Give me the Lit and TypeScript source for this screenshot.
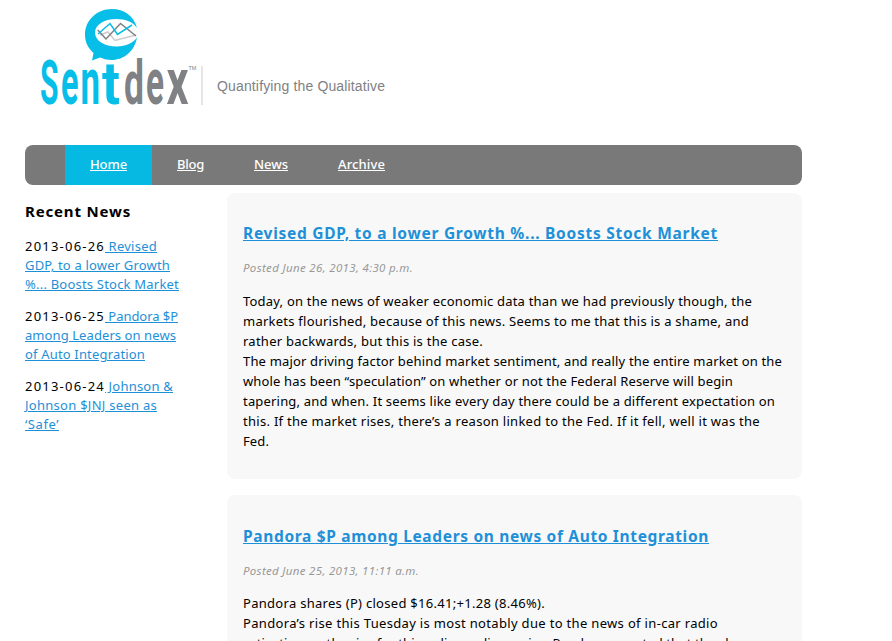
import { LitElement, html, css, svg } from "lit";
import { customElement, property } from "lit/decorators.js";

/** One line of text, tracked so that it spans the given width. */
@customElement("fit-line")
class FitLine extends LitElement {
  @property({ type: Number }) span = 0;
  static styles = css`
    :host { display: block; width: max-content; white-space: pre; }
  `;
  render() { return html`<slot></slot>`; }
  firstUpdated() {
    const count = (this.textContent ?? "").length;
    const natural = this.getBoundingClientRect().width;
    if (count && this.span) this.style.letterSpacing = `${(this.span - natural) / count}px`;
  }
}

type Line = [string, number];
interface Post { title: Line; posted: Line; body: Line[]; }
interface News { date: string; lines: Line[]; }

const nav: [Line, boolean][] = [
  [["Home", 37], true], [["Blog", 27], false], [["News", 34], false], [["Archive", 47], false],
];

const news: News[] = [
  { date: "2013-06-26", lines: [[" Revised", 52], ["GDP, to a lower Growth", 145], ["%... Boosts Stock Market", 154]] },
  { date: "2013-06-25", lines: [[" Pandora $P", 73], ["among Leaders on news", 151], ["of Auto Integration", 120]] },
  { date: "2013-06-24", lines: [[" Johnson &", 68], ["Johnson $JNJ seen as", 132], ["‘Safe’", 34]] },
];

const posts: Post[] = [
  {
    title: ["Revised GDP, to a lower Growth %... Boosts Stock Market", 475],
    posted: ["Posted June 26, 2013, 4:30 p.m.", 170],
    body: [
      ["Today, on the news of weaker economic data than we had previously though, the", 509],
      ["markets flourished, because of this news. Seems to me that this is a shame, and", 506],
      ["rather backwards, but this is the case.", 240],
      ["The major driving factor behind market sentiment, and really the entire market on the", 539],
      ["whole has been “speculation” on whether or not the Federal Reserve will begin", 490],
      ["tapering, and when. It seems like every day there could be a different expectation on", 532],
      ["this. If the market rises, there’s a reason linked to the Fed. If it fell, well it was the", 517],
      ["Fed.", 26],
    ],
  },
  {
    title: ["Pandora $P among Leaders on news of Auto Integration", 466],
    posted: ["Posted June 25, 2013, 11:11 a.m.", 176],
    body: [
      ["Pandora shares (P) closed $16.41;+1.28 (8.46%).", 302],
      ["Pandora’s rise this Tuesday is most notably due to the news of in-car radio", 475],
      ["activation on the rise for this online radio service. Pandora reported that they have", 512],
    ],
  },
];

/* letter, left edge, width, classes */
const glyphs: [string, number, number, string][] = [
  ["S", 40, 18.5, "cyan tall"], ["e", 61, 17.5, "cyan low"], ["n", 80.5, 19.5, "cyan low"], ["t", 102, 18, "cyan mid"],
  ["d", 124, 20, "grey tall"], ["e", 146, 18, "grey low"], ["x", 166.5, 22, "grey low"],
];

@customElement("app-root")
class AppRoot extends LitElement {
  static styles = css`
    :host { display: block; height: 641px; overflow: hidden; background: #fff; color: #000;
      font: 13px/20px "Noto Sans", "Open Sans", sans-serif; }
    .logo { display: block; width: 400px; height: 145px; }
    .cyan { fill: #06bee8; }
    .grey { fill: #808184; }
    .word { font-family: "Roboto", sans-serif; font-weight: bold; }
    .tall { font-size: 61px; }
    .mid { font-size: 60px; }
    .low { font-size: 65px; }
    .tm { font: 5.5px "Liberation Sans", sans-serif; fill: #808184; }
    .tag { font: 14px "Liberation Sans", sans-serif; fill: #808184; }
    nav { display: flex; box-sizing: border-box; width: 777px; height: 40px; margin-left: 25px;
      padding-left: 40px; border-radius: 8px; background: #797979; }
    nav a { padding: 9px 25px 11px; color: #fff; text-decoration: underline; font-weight: 500; }
    nav a.on { background: #06b9e3; }
    .page { display: grid; grid-template-columns: 202px 575px; padding: 8px 0 0 25px; }
    aside { line-height: 19px; }
    h3 { margin: 9px 0 16px; font-size: 15px; line-height: 19px; }
    .item { margin-bottom: 13px; }
    .row { display: flex; }
    .link { color: #1e90d8; text-decoration: underline; }
    article { box-sizing: border-box; margin-bottom: 16px; padding: 30px 16px 28px; border-radius: 8px; background: #f8f8f8; }
    article + article { padding-top: 31px; }
    article + article .posted { margin-bottom: 12px; }
    h2 { margin: 0 0 15px; font-size: 15.5px; line-height: 20px; }
    .posted { margin-bottom: 13px; font-size: 11.5px; font-style: italic; color: #999; }
  `;

  line([text, width]: Line, cls = "") {
    return html`<fit-line class=${cls} .span=${width}>${text}</fit-line>`;
  }

  render() {
    return html`
      <svg class="logo" viewBox="0 0 400 145">
        <path class="cyan" d="M137 28C134 16 124 9 112 9C97 9 85 20 85 35C85 42 88 48 93.500 53L92 60.500L100 57.500C117 65 134 55 137 37.500C133 43 126 46.500 117 46.500C104 46.500 95 40.500 95 32.500C95 25 104 19 116 19C126 19 133 22 137 28Z"/>
        <g fill="none" stroke-width="1.5">
          <path stroke="#ccc" d="M100 35L108 32L115 40.500L136 35"/>
          <path stroke="#808184" d="M97.700 30L106 39L120.500 23.500L136 36"/>
          <path stroke="#06bee8" d="M98 34L110 23.500L117.500 34.500L132 25"/>
        </g>
        ${glyphs.map(([c, x, w, cls]) => svg`<text class="word ${cls}" x=${x} y="104" textLength=${w} lengthAdjust="spacingAndGlyphs">${c}</text>`)}
        <text class="tm" x="188.500" y="70">TM</text>
        <path d="M202 66V105" stroke="#ddd" stroke-width="1.5"/>
        <text class="tag" x="217" y="90.500" textLength="168">Quantifying the Qualitative</text>
      </svg>
      <nav>${nav.map(([l, on]) => html`<a class=${on ? "on" : ""}>${this.line(l)}</a>`)}</nav>
      <div class="page">
        <aside>
          <h3>${this.line(["Recent News", 106])}</h3>
          ${news.map((n) => html`<div class="item">
            <div class="row">${this.line([n.date, 80])}${this.line(n.lines[0], "link")}</div>
            ${n.lines.slice(1).map((l) => this.line(l, "link"))}
          </div>`)}
        </aside>
        <main>
          ${posts.map((p) => html`<article>
            <h2>${this.line(p.title, "link")}</h2>
            <div class="posted">${this.line(p.posted)}</div>
            ${p.body.map((l) => this.line(l))}
          </article>`)}
        </main>
      </div>`;
  }
}
